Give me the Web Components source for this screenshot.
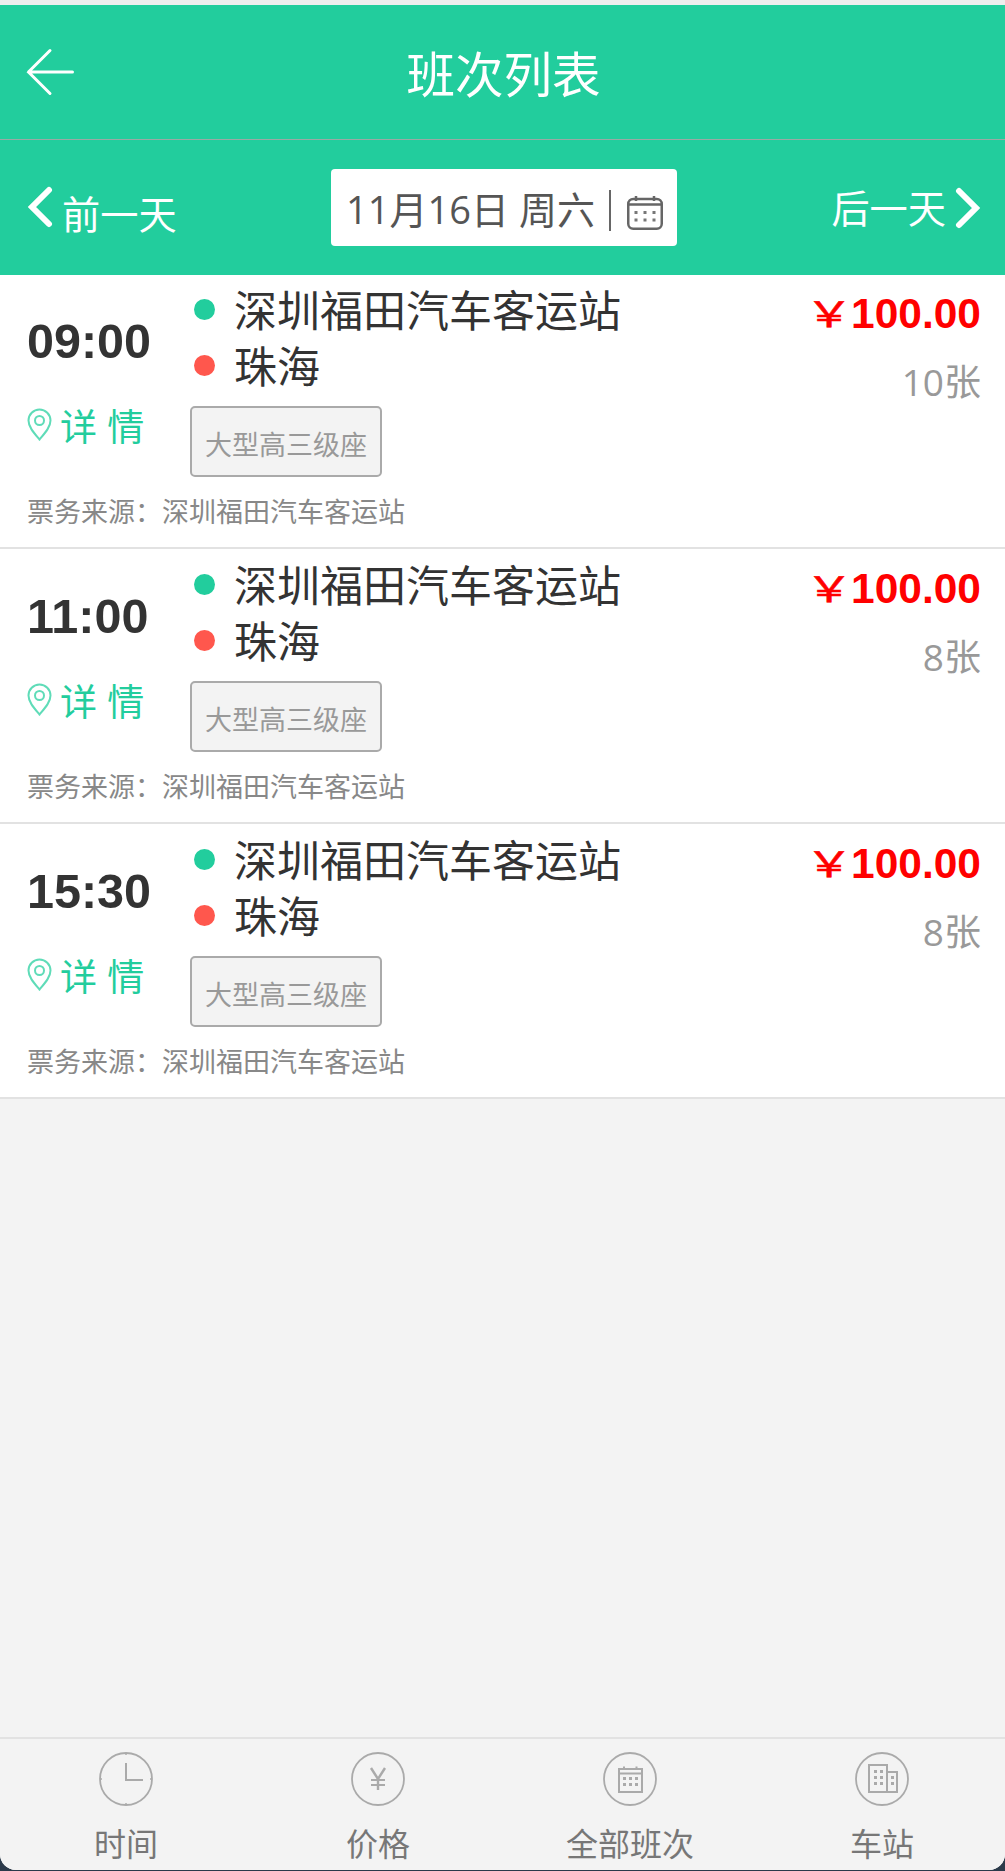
<!DOCTYPE html>
<html lang="zh-CN"><head><meta charset="utf-8"><title>班次列表</title>
<style>
html,body{margin:0;padding:0;background:#eee}
body{width:1005px;height:1871px;font-family:"Noto Sans CJK SC","Open Sans",sans-serif;overflow:hidden;background:#2b3a4a}
app-shell{height:1871px}
</style></head><body>
<app-shell>
  <top-bar slot="top" title-text="班次列表"></top-bar>
  <date-bar slot="top" date="11月16日 周六"></date-bar>
  <trip-row time="09:00" seats="10张"></trip-row>
  <trip-row time="11:00" seats="8张"></trip-row>
  <trip-row time="15:30" seats="8张"></trip-row>
  <tab-bar slot="bottom"></tab-bar>
</app-shell>
<script>
const CJK='"Noto Sans CJK SC",sans-serif';
function def(name,html){
  customElements.define(name,class extends HTMLElement{
    connectedCallback(){ if(this.shadowRoot)return;
      const s=this.attachShadow({mode:'open'});
      s.innerHTML=typeof html==='function'?html(this):html; }
  });
}
def('app-shell',`<style>
:host{display:block;width:1005px;position:relative}
.wrap{height:1870px;background:#f3f3f3;border-radius:0 0 16px 16px;overflow:hidden;display:flex;flex-direction:column;box-sizing:border-box;position:relative}
.wrap::before{content:"";display:block;height:5px;flex:none;background:#eee}
.list{flex:1;min-height:0;margin-top:-1px}
</style><div class="wrap"><slot name="top"></slot><div class="list"><slot></slot></div><slot name="bottom"></slot></div>`);
def('top-bar',h=>`<style>
:host{display:flex;align-items:center;height:134px;background:#22cd9d;position:relative;border-bottom:1px solid #9aa9a4}
svg{display:block;margin-left:26px;flex:none}
h1{margin:0;font:400 48.500px/1 ${CJK};color:#fff;position:absolute;left:0;right:0;text-align:center;top:43px;padding-left:2px}
</style><svg width="50" height="48" viewBox="0 0 50 48"><path d="M24 2.500 2.500 24 24 45.500M2.500 24H46.500" fill="none" stroke="#fff" stroke-width="3" stroke-linecap="round"/></svg><h1>${h.getAttribute('title-text')}</h1>`);
def('date-bar',h=>`<style>
:host{display:flex;align-items:center;justify-content:space-between;height:135px;background:#22cd9d;padding:0 24px 0 27px;box-sizing:border-box;color:#fff;font:400 38.200px/1 ${CJK};position:relative;z-index:1}
.side{display:flex;align-items:center;width:220px}
.r{justify-content:flex-end}
.l span{margin:12px 0 0 9px}
.r span{margin:0 9px 0 0}
.date{display:flex;align-items:center;height:77px;background:#fff;border-radius:4px;padding:0 14px 0 15px;color:#555;box-sizing:border-box;flex:none}
.d{font-family:"Open Sans",${CJK};font-size:38px;margin-top:3px}
i{display:block;width:2px;height:41px;background:#666;margin:6px 16px 0 14px}
svg{display:block;flex:none}
.cal{margin-top:11px}
</style>
<div class="side l"><svg width="26" height="42" viewBox="0 0 26 42"><path d="M22 4 5 21 22 38" fill="none" stroke="#fff" stroke-width="6" stroke-linecap="round"/></svg><span>前一天</span></div>
<div class="date"><span class="d">${h.getAttribute('date')}</span><i></i><svg class="cal" width="36" height="34" viewBox="0 0 36 34"><g fill="none" stroke="#666" stroke-width="2.500"><rect x="1.250" y="3" width="33.500" height="29.750" rx="5"/><path d="M1.250 8.500H34.750M9 0V5M27 0V5"/></g><g fill="#777"><rect x="7.500" y="15" width="3" height="3"/><rect x="16.500" y="15" width="3" height="3"/><rect x="25.500" y="15" width="3" height="3"/><rect x="7.500" y="22.500" width="3" height="3"/><rect x="16.500" y="22.500" width="3" height="3"/><rect x="25.500" y="22.500" width="3" height="3"/></g></svg></div>
<div class="side r"><span>后一天</span><svg width="26" height="42" viewBox="0 0 26 42"><path d="M4 4 21 21 4 38" fill="none" stroke="#fff" stroke-width="6" stroke-linecap="round"/></svg></div>`);
def('trip-row',h=>`<style>
:host{display:block;height:275px;box-sizing:border-box;background:#fff;border-bottom:2px solid #e2e2e2;padding:0 24px 0 27px;font-family:${CJK}}
.main{display:flex;height:221px}
.left{width:163px;flex:none}
.time{font:700 48.500px/1 "Liberation Sans",sans-serif;color:#333;margin-top:43px}
.detail{display:flex;align-items:center;margin-top:39px;color:#22cd9d;font-size:37px;line-height:40px;gap:8px;word-spacing:2px}
.detail svg{flex:none}
.mid{flex:1;min-width:0}
.st{display:flex;align-items:center;height:56px;font-size:43px;line-height:56px;color:#333;margin-left:4px;gap:20px}
.st:first-child{margin-top:6px}
.st span:last-child{margin-left:-1px}
.dot{width:21px;height:21px;border-radius:50%;flex:none;margin-top:2px}
.tag{display:flex;align-items:center;justify-content:center;width:192px;height:71px;box-sizing:border-box;border:2px solid #aaa;border-radius:5px;background:#f3f3f3;color:#999;font-size:27px;line-height:1;margin-top:14px;padding-top:4px}
.right{display:flex;flex-direction:column;align-items:flex-end;flex:none}
.price{font:700 42.500px/1 "Liberation Sans",sans-serif;color:#f00;display:flex;align-items:center;margin-top:19px;height:42px}
.price em{font:400 43px/1 ${CJK};font-style:normal;margin-right:-1px;-webkit-text-stroke:.6px #f00;display:block;transform-origin:right center;transform:translate(1px,-3px) scale(1.110,.830)}
.seats{font:400 37px/1 "Open Sans",${CJK};color:#999;margin-top:28px}
.src{font-size:27px;line-height:32px;color:#888;white-space:nowrap}
</style>
<div class="main"><div class="left"><div class="time">${h.getAttribute('time')}</div>
<div class="detail"><svg width="25" height="33" viewBox="0 0 25 33"><path d="M12.500 31.500C7 25 1.500 19 1.500 12.500a11 11 0 0 1 22 0C23.500 19 18 25 12.500 31.500Z" fill="none" stroke="#5fdcb8" stroke-width="2"/><circle cx="12.500" cy="12.500" r="4.500" fill="none" stroke="#5fdcb8" stroke-width="2"/></svg><span>详 情</span></div></div>
<div class="mid"><div class="st"><span class="dot" style="background:#22cd9d"></span><span>深圳福田汽车客运站</span></div>
<div class="st"><span class="dot" style="background:#ff574d"></span><span>珠海</span></div>
<div class="tag">大型高三级座</div></div>
<div class="right"><div class="price"><em>￥</em>100.00</div><div class="seats">${h.getAttribute('seats')}</div></div></div>
<div class="src">票务来源：深圳福田汽车客运站</div>`);
const ic=b=>`<svg width="54" height="54" viewBox="0 0 54 54"><circle cx="27" cy="27" r="26" fill="none" stroke="#aaa" stroke-width="1.800"/>${b}</svg>`;
def('tab-bar',`<style>
:host{display:grid;grid-template-columns:repeat(4,252px);justify-content:start;height:133px;box-sizing:border-box;border-top:2px solid #e2e2e2;background:#f3f3f3}
.t{display:flex;flex-direction:column;align-items:center;color:#777;font:400 32px/1 ${CJK};padding-top:13px}
.t span{margin-top:20px}
svg{display:block}
</style>
<div class="t">${ic('<path d="M27 11V28H44" fill="none" stroke="#aaa" stroke-width="2"/><path d="M27 1V3M27 51V53M1 27H3M51 27H53" stroke="#aaa" stroke-width="1.500"/>')}<span>时间</span></div>
<div class="t">${ic('<path d="M20 16 27 27 34 16M27 27V38" fill="none" stroke="#aaa" stroke-width="2.400"/><path d="M20 28H34M20 33H34" fill="none" stroke="#aaa" stroke-width="1.800"/>')}<span>价格</span></div>
<div class="t">${ic('<g fill="none" stroke="#aaa" stroke-width="2"><rect x="16" y="17" width="23" height="23"/><path d="M16 21.500H39M21 14.500V18M33.500 14.500V18"/></g><g fill="#aaa"><rect x="20" y="25" width="3" height="3"/><rect x="26" y="25" width="3" height="3"/><rect x="32" y="25" width="3" height="3"/><rect x="20" y="31" width="3" height="3"/><rect x="26" y="31" width="3" height="3"/><rect x="32" y="31" width="3" height="3"/></g>')}<span>全部班次</span></div>
<div class="t">${ic('<g fill="none" stroke="#aaa" stroke-width="2"><rect x="14" y="13" width="18" height="27"/><rect x="32" y="20" width="10" height="20"/></g><g fill="#aaa"><rect x="19" y="18" width="3" height="3"/><rect x="25" y="18" width="3" height="3"/><rect x="19" y="24" width="3" height="3"/><rect x="25" y="24" width="3" height="3"/><rect x="19" y="30" width="3" height="3"/><rect x="25" y="30" width="3" height="3"/><rect x="36" y="24" width="3" height="3"/><rect x="36" y="30" width="3" height="3"/></g>')}<span>车站</span></div>`);
</script>
</body></html>
